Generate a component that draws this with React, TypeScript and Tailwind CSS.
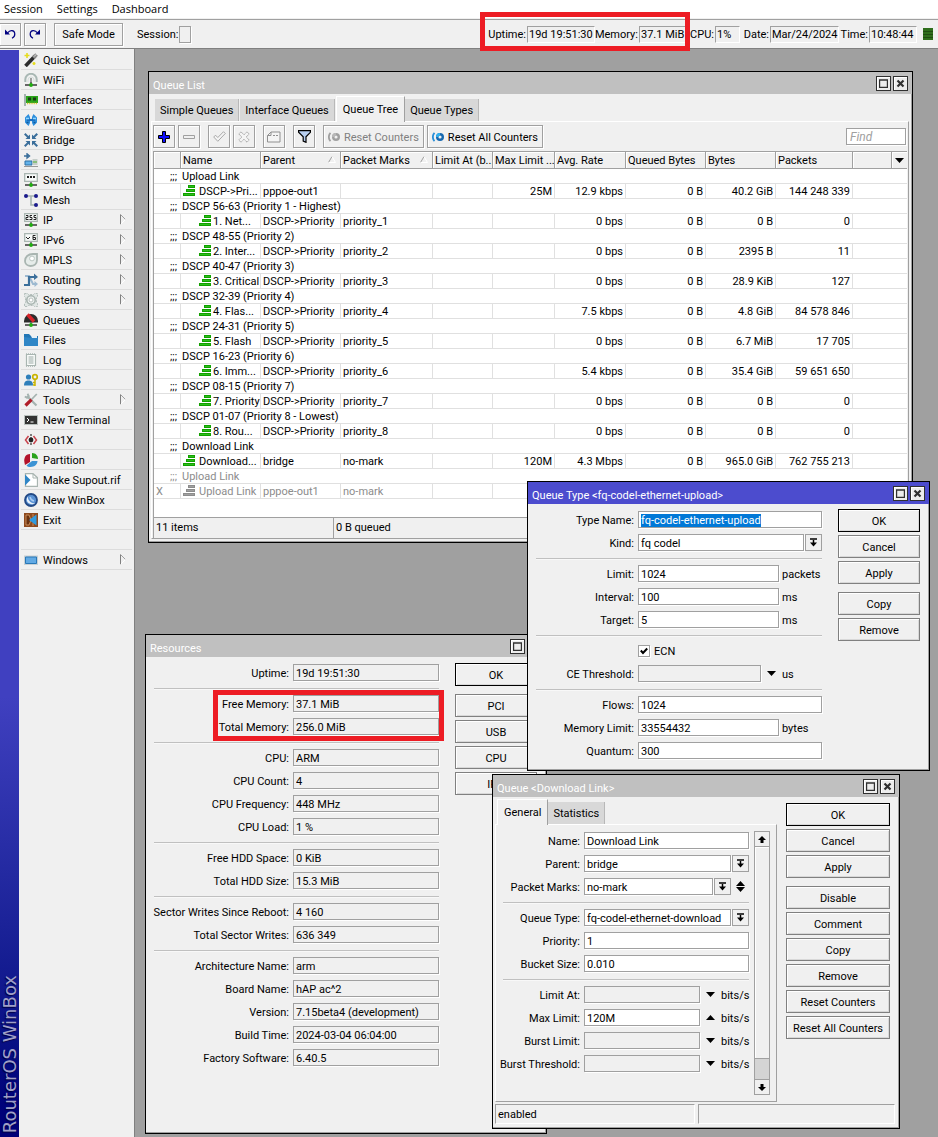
import { useEffect, useRef, type ReactNode } from 'react';
import clsx from 'clsx';

const FIELD =
  'h-[17px] min-w-0 rounded-none border border-[#a0a0a0] px-[2px] pt-[2px] text-[11px] leading-[13px] shadow-[1px_1px_0_#fff] outline-none';

/* ---------- icons ---------- */

const Svg = ({ children, className = 'size-[14px]', box = '0 0 14 14' }: { children: ReactNode; className?: string; box?: string }) => (
  <svg viewBox={box} className={clsx('shrink-0', className)} aria-hidden="true">
    {children}
  </svg>
);

const Port = () => (
  <>
    <path d="M1 12h12" stroke="#444" strokeWidth="1.6" />
    <path d="M7 9v3" stroke="#555" strokeWidth="1.4" />
    <circle cx="7" cy="12" r="1.9" fill="#1fae10" />
  </>
);

const ICONS: Record<string, ReactNode> = {
  'Quick Set': (
    <>
      <path d="M1.5 13 11 3" stroke="#2b2b2b" strokeWidth="3.6" />
      <path d="M9.3 4.8 12.6 1.4" stroke="#8c8c8c" strokeWidth="3.6" />
      <path d="M10 3.6 12.4 1.2" stroke="#e0e0e0" strokeWidth="1" />
      <path d="M3 0v5M.5 2.5h5M10 9v3M8.5 10.5h3" stroke="#e6dc1e" strokeWidth="1.6" />
    </>
  ),
  WiFi: (
    <>
      <path d="M1.3 9V6.5a5.7 5.7 0 0 1 11.4 0V9" fill="none" stroke="#a9b8b4" strokeWidth="2" />
      <path d="M4 9V7a3 3 0 0 1 6 0v2" fill="none" stroke="#d5dedb" strokeWidth="1" />
      <path d="M7 5v6" stroke="#888" strokeWidth="1.6" />
      <Port />
    </>
  ),
  Interfaces: (
    <>
      <path d="M1 1v12" stroke="#a5b3b0" strokeWidth="2" />
      <path d="M2 3h12v7H2z" fill="#2ca51b" />
      <path d="M4 4.5h3v3H4zM9 4.5h3v3H9z" fill="#1b3a17" />
      <path d="M3 10.5h10" stroke="#d9c62b" strokeWidth="1.4" strokeDasharray="1.2 1" />
    </>
  ),
  WireGuard: (
    <>
      <path d="M4.500 1 1 4.500v5L4.500 13 6 10V4zM9.500 1 13 4.500v5L9.500 13 8 10V4z" fill="#2f8fdc" />
      <path d="M3 7h8" stroke="#1a6fc0" strokeWidth="2.200" />
      <path d="M2 5.500h3M9 5.500h3" stroke="#8fd6ff" strokeWidth="1.400" />
      <path d="M2.500 9.500h2M9.500 9.500h2" stroke="#125a9e" strokeWidth="1.400" />
    </>
  ),
  Bridge: (
    <g fill="#3b6f9b">
      <path d="M6 6H1.500l1.600-1.600L0 1.500 1.500 0l2.900 3.100L6 1.500zM8 6V1.500l1.600 1.600L12.500 0 14 1.500l-3.100 2.900L12.500 6z" />
      <path d="M6 8v4.500l-1.600-1.600L1.500 14 0 12.500l3.100-2.900L1.500 8zM8 8h4.500l-1.600 1.600 3.100 2.900-1.500 1.500-2.900-3.100L8 12.500z" />
    </g>
  ),
  PPP: (
    <>
      <path d="M0 3h4M3 0.8 5.6 3 3 5.2z" stroke="#3b6f9b" strokeWidth="1.3" fill="#3b6f9b" />
      <path d="M1 8h7v4H1z" fill="#62b2ea" stroke="#2a6ea5" />
      <path d="M8.500 6h5v6h-5z" fill="#c6ceca" />
      <path d="M9 9h4" stroke="#4fae30" />
      <path d="M0 13.500h14" stroke="#999" />
    </>
  ),
  Switch: (
    <>
      <path d="M.7 .7h12.600v7.600H.7z" fill="#f7faf9" stroke="#a9b5b1" strokeWidth="1.3" />
      <path d="M3 4h2M6 4h2M9 4h2" stroke="#222" strokeWidth="1.8" />
      <Port />
    </>
  ),
  Mesh: (
    <>
      <path d="M2 3h10M7 3v9h5" fill="none" stroke="#a5b3b0" strokeWidth="1.6" />
      <circle cx="2" cy="3" r="2" fill="#1a1a8c" />
      <circle cx="12" cy="3" r="2" fill="#1a1a8c" />
      <circle cx="12" cy="12" r="2" fill="#1a1a8c" />
    </>
  ),
  IP: (
    <>
      <path d="M.7 .7h12.600v7.600H.7z" fill="#f7faf9" stroke="#a9b5b1" strokeWidth="1.3" />
      <path d="M2 2.500h2v2h-2v2h2.500M8 2.500H6v2h2v2H5.500M12 2.500h-2v2h2v2h-2.500" fill="none" stroke="#222" strokeWidth="1" />
      <Port />
    </>
  ),
  IPv6: (
    <>
      <path d="M.7 .7h12.600v7.600H.7z" fill="#f7faf9" stroke="#a9b5b1" strokeWidth="1.3" />
      <path d="M2 4l2 2 2-2M11.500 2.500H9v4h2.500v-2H9" fill="none" stroke="#222" strokeWidth="1" />
      <Port />
    </>
  ),
  MPLS: (
    <>
      <path d="M13 1v6c0 4-3 6-6.500 6C3 13 1 10.500 1 8c0-4 3-7 8-7z" fill="#e6ecea" stroke="#a9b5b1" strokeWidth="1.8" />
      <circle cx="8" cy="5.500" r="2.400" fill="#fff" stroke="#bac5c1" />
    </>
  ),
  Routing: (
    <>
      <path d="M1 3h4l4 8h2" fill="none" stroke="#9db9d0" strokeWidth="2" />
      <path d="M10.500 8v6L14 11z" fill="#9db9d0" />
      <path d="M0 12h5V4h5" fill="none" stroke="#3b6f9b" strokeWidth="2.200" />
      <path d="M10 .5v6.500L14 4z" fill="#3b6f9b" />
    </>
  ),
  System: (
    <>
      <path d="M.5 .5h3l1 1h5l1-1h3v3l-1 1v5l1 1v3h-3l-1-1h-5l-1 1h-3v-3l1-1v-5l-1-1z" fill="#e0e6e4" stroke="#b3bebb" strokeDasharray="2 1" />
      <circle cx="7" cy="7" r="4.200" fill="#eef1f0" stroke="#a9b5b1" strokeWidth="1.600" />
      <circle cx="7" cy="7" r="2" fill="#fff" stroke="#b7c1be" />
    </>
  ),
  Queues: (
    <>
      <path d="M0 8a7 7 0 0 1 14 0v1.500H0z" fill="#2c2c2c" />
      <path d="M3.500 1.500 10 8.500" stroke="#d8232a" strokeWidth="3.400" />
      <Port />
    </>
  ),
  Files: (
    <>
      <path d="M0 1h5l2 2h7v10H0z" fill="#2377b5" />
      <path d="M7 3h6v2H8z" fill="#e6f0f7" />
      <path d="M0 4l8 1h6v8H0z" fill="#2f86c6" />
    </>
  ),
  Log: (
    <>
      <path d="M2.500 1.500h9v11h-9z" fill="#fafcfb" stroke="#a9b5b1" strokeWidth="1.200" />
      <path d="M4.500 4h5M4.500 6h5M4.500 8h5M4.500 10h5" stroke="#9aa8a4" />
      <path d="M2 .8h10M2 13.300h10" stroke="#a9b5b1" strokeDasharray="1 1" />
    </>
  ),
  RADIUS: (
    <>
      <circle cx="4.500" cy="4" r="2.600" fill="#2f7fba" />
      <path d="M0 12.500c0-4 2-5 4.500-5S9 8.500 9 12.500z" fill="#2f7fba" />
      <circle cx="11" cy="4" r="2.300" fill="none" stroke="#c9b400" strokeWidth="1.700" />
      <path d="M11 6v7M11 9.500H9M11 12H9" stroke="#c9b400" strokeWidth="1.500" />
    </>
  ),
  Tools: (
    <>
      <path d="M3 3l9.500 9.500" stroke="#a5b3b0" strokeWidth="2.200" />
      <path d="M.8 3.500 3 4.800 4.800 3 3.500 .8" stroke="#a5b3b0" strokeWidth="1.800" fill="none" />
      <path d="M7.500 6.500 12.800 1" stroke="#a5b3b0" strokeWidth="1.800" />
      <path d="M1.500 12.500 7.500 6.700" stroke="#b01c28" strokeWidth="3.200" />
    </>
  ),
  'New Terminal': (
    <>
      <path d="M.5 2.500h13v9H.5z" fill="#333" stroke="#b9c1be" />
      <path d="M3 5l2 2-2 2M6.500 9h3" fill="none" stroke="#fff" />
    </>
  ),
  Dot1X: (
    <>
      <path d="M4.500 3 1.500 7l3 4M9.500 3l3 4-3 4" fill="none" stroke="#c8434c" strokeWidth="1.500" />
      <path d="M7 1v12" stroke="#555" strokeWidth="1.500" strokeDasharray="2 1" />
      <circle cx="7" cy="7" r="2.400" fill="#222" />
    </>
  ),
  Partition: (
    <>
      <path d="M6 1v8L1 12C-1 6 1 1 6 1z" fill="#b3122a" />
      <path d="M8 0c4 0 6 3 6 6L8 5z" fill="#2aa31c" />
      <path d="M13.500 8c0 3-3 6-7 6-2 0-3-.5-4-1.500L8 8z" fill="#3c93d4" />
    </>
  ),
  'Make Supout.rif': (
    <>
      <path d="M1.500 .7H9l4.500 4v8.600h-12z" fill="#fff" stroke="#a9b5b1" strokeWidth="1.300" />
      <path d="M9 1v4h4" fill="none" stroke="#a9b5b1" />
      <path d="M1 1.500 6.500 7 1 12.500z" fill="#2f86c6" />
    </>
  ),
  'New WinBox': (
    <>
      <circle cx="7" cy="7" r="6" fill="#5a92d4" stroke="#234a86" strokeWidth="1.800" />
      <path d="M3.800 3.500C3.800 7.500 7 10.500 11 10.300 9.500 12 4.800 11.500 3.200 8.500 2.500 7 2.800 4.800 3.800 3.500z" fill="#e8f2fc" />
      <path d="M6 4c.5 2 2 3.500 4 4" fill="none" stroke="#a9ccf2" strokeWidth="1.400" />
    </>
  ),
  Exit: (
    <>
      <path d="M0 0h14v14H0z" fill="#8e4a1e" />
      <path d="M2 2h3l2 5-2 5H2zM9 1v3M9 10v3" fill="#6a3210" stroke="#d9a06a" strokeWidth=".8" />
      <path d="M12.500 1.500v11L5 7z" fill="#2f9be0" />
    </>
  ),
  Windows: (
    <>
      <path d="M0 2.500h14v9.500H0z" fill="#c8d0d4" />
      <path d="M1.500 4h11v6.500h-11z" fill="#62aae4" stroke="#2878b8" />
    </>
  ),
};

const QueueIcon = ({ off }: { off?: boolean }) => (
  <Svg box="0 0 12 11" className="-mt-px h-[11px] w-3">
    <path d="M5 0h7v3H5zM3 4h9v3H3zM0 8h12v3H0z" fill={off ? '#8c8c8c' : '#12a000'} />
    <path d="M6 1.500h5M4 5.500h7M1 9.500h10" stroke={off ? '#a0a0a0' : '#2cc01a'} />
  </Svg>
);

const ResetIcon = ({ off }: { off?: boolean }) => (
  <Svg box="0 0 12 10" className="h-[10px] w-3">
    <path d="M2.500 .8C.3 3 .3 7 2.500 9.200" fill="none" stroke={off ? '#a0a0a0' : '#2a8fd8'} strokeWidth="1.800" />
    <circle cx="8" cy="5" r="2.800" fill="none" stroke={off ? '#a0a0a0' : '#1668b0'} strokeWidth="2.400" />
    <path d="M5.200 5A2.800 2.800 0 0 1 8 2.200" fill="none" stroke={off ? '#b8b8b8' : '#2fb0f0'} strokeWidth="2.400" />
  </Svg>
);

const DropIcon = () => (
  <Svg box="0 0 9 9" className="size-[9px]">
    <path d="M1 1h7M4.500 2v3" stroke="#000" strokeWidth="1.500" />
    <path d="M1 4.500h7L4.500 8.500z" />
  </Svg>
);

const Triangle = ({ up }: { up?: boolean }) => (
  <Svg box="0 0 9 5" className="h-[5px] w-[9px]">
    <path d={up ? 'M0 5h9L4.500 0z' : 'M0 0h9L4.500 5z'} />
  </Svg>
);

/* ---------- window parts ---------- */

const TitleButton = ({ name }: { name: string }) => (
  <button aria-label={name} className="flex size-[15px] items-center justify-center border border-[#303030] bg-[#ececec] shadow-[inset_1px_1px_0_#fff]">
    <Svg box="0 0 9 9" className="size-[9px]">
      {name === 'Close' ? (
        <path d="M1.500 1.500l6 6M7.500 1.500l-6 6" stroke="#303030" strokeWidth="2.200" />
      ) : (
        <path d="M.5 1v7.500h8V1M0 1h9" fill="none" stroke="#303030" strokeWidth="1.400" />
      )}
    </Svg>
  </button>
);

const Window = ({ title, active, className, children }: { title: string; active?: boolean; className: string; children: ReactNode }) => (
  <section className={clsx('absolute flex flex-col border border-black bg-[#f0f0f0] shadow-[inset_-1px_-1px_0_#a0a0a0]', className)}>
    <header className={clsx('flex h-[22px] shrink-0 items-center gap-[2px] pr-1 pl-1 text-white', active ? 'bg-[#4c4cce]' : 'bg-[#c0c0c0]')}>
      <h2 className="flex-1 pt-[6px] leading-4">{title}</h2>
      <TitleButton name="Maximize" />
      <TitleButton name="Close" />
    </header>
    {children}
  </section>
);

const Buttons = ({ groups, className }: { groups: string[][]; className: string }) => (
  <div className={clsx('flex shrink-0 flex-col gap-2', className)}>
    {groups.map((group) => (
      <div key={group[0]} className="flex flex-col gap-[3px]">
        {group.map((name) => (
          <button
            key={name}
            className={clsx(
              'h-[23px] border bg-[#f0f0f0] pt-[2px] text-center whitespace-nowrap shadow-[inset_1px_1px_0_#fff,inset_-1px_-1px_0_#d8d8d8]',
              name === 'OK' ? 'border-black' : 'border-[#808080]',
            )}
          >
            {name}
          </button>
        ))}
      </div>
    ))}
  </div>
);

const Separator = () => <hr className="mt-px h-px border-0 bg-[#c0c0c0] shadow-[0_1px_0_#f8f8f8]" />;

type RowProps = { id: string; label: string; labelWidth: string; children: ReactNode };

const Row = ({ id, label, labelWidth, children }: RowProps) => (
  <div className="flex h-[17px] items-center gap-1">
    <label htmlFor={id} className={clsx('flex shrink-0 justify-end pt-[2px] whitespace-nowrap', labelWidth)}>
      {label}
    </label>
    <div className="flex min-w-0 flex-1 items-center">{children}</div>
  </div>
);

const Unit = ({ name, className }: { name: string; className: string }) => (
  <span className={clsx('shrink-0 pt-[2px] pl-[3px] whitespace-nowrap', className)}>{name}</span>
);

const Input = ({ id, value = '', off }: { id: string; value?: string; off?: boolean }) => (
  <input id={id} defaultValue={value} readOnly={off} className={clsx(FIELD, 'flex-1', off ? 'bg-[#f0f0f0]' : 'bg-white')} />
);

const Select = ({ id, value }: { id: string; value: string }) => (
  <>
    <select id={id} defaultValue={value} className={clsx(FIELD, 'flex-1 appearance-none bg-white')}>
      <option>{value}</option>
    </select>
    <button
      aria-label={`Choose ${value}`}
      className="ml-px flex size-[17px] shrink-0 items-center justify-center border border-[#a0a0a0] bg-[#f0f0f0]"
    >
      <DropIcon />
    </button>
  </>
);

const Tab = ({ name, active }: { name: string; active?: boolean }) => (
  <button
    role="tab"
    aria-selected={!!active}
    className={clsx(
      'border-r border-[#a0a0a0] pt-[2px] whitespace-nowrap',
      active
        ? 'z-10 -mb-px h-[26px] border-t border-l border-t-white border-l-white bg-[#f0f0f0] px-[6px] pb-[2px]'
        : 'mr-px h-[22px] border-r-[#b8b8b8] bg-[#d8d8d8] px-[5px]',
    )}
  >
    {name}
  </button>
);

/* ---------- queue list ---------- */

type Queue = {
  comment: string;
  name: string;
  parent: string;
  mark?: string;
  max?: string;
  rate?: string;
  queued?: string;
  bytes?: string;
  packets?: string;
  nested?: boolean;
  off?: boolean;
};

const child = (comment: string, name: string, mark: string, rate: string, bytes: string, packets: string): Queue => ({
  comment,
  name,
  parent: 'DSCP->Priority',
  mark,
  rate,
  queued: '0 B',
  bytes,
  packets,
  nested: true,
});

const QUEUES: Queue[] = [
  { comment: 'Upload Link', name: 'DSCP->Pri...', parent: 'pppoe-out1', max: '25M', rate: '12.9 kbps', queued: '0 B', bytes: '40.2 GiB', packets: '144 248 339' },
  child('DSCP 56-63 (Priority 1 - Highest)', '1. Net...', 'priority_1', '0 bps', '0 B', '0'),
  child('DSCP 48-55 (Priority 2)', '2. Inter...', 'priority_2', '0 bps', '2395 B', '11'),
  child('DSCP 40-47 (Priority 3)', '3. Critical', 'priority_3', '0 bps', '28.9 KiB', '127'),
  child('DSCP 32-39 (Priority 4)', '4. Flas...', 'priority_4', '7.5 kbps', '4.8 GiB', '84 578 846'),
  child('DSCP 24-31 (Priority 5)', '5. Flash', 'priority_5', '0 bps', '6.7 MiB', '17 705'),
  child('DSCP 16-23 (Priority 6)', '6. Imm...', 'priority_6', '5.4 kbps', '35.4 GiB', '59 651 650'),
  child('DSCP 08-15 (Priority 7)', '7. Priority', 'priority_7', '0 bps', '0 B', '0'),
  child('DSCP 01-07 (Priority 8 - Lowest)', '8. Rou...', 'priority_8', '0 bps', '0 B', '0'),
  { comment: 'Download Link', name: 'Download...', parent: 'bridge', mark: 'no-mark', max: '120M', rate: '4.3 Mbps', queued: '0 B', bytes: '965.0 GiB', packets: '762 755 213' },
  { comment: 'Upload Link', name: 'Upload Link', parent: 'pppoe-out1', mark: 'no-mark', off: true },
];

const COLUMNS = ['', 'Name', 'Parent', 'Packet Marks', 'Limit At (b...', 'Max Limit ...', 'Avg. Rate', 'Queued Bytes', 'Bytes', 'Packets', ''];
const TD = 'h-[15px] overflow-hidden border-r border-b border-[#e0e0e0] pt-[2px] pl-[2px] leading-[12px] whitespace-nowrap';
const TD_NUMBER = clsx(TD, 'pr-[2px] text-right');

const QueueTable = () => (
  <table className="w-full table-fixed border-separate border-spacing-0">
    <colgroup>
      <col className="w-[27px]" />
      <col className="w-20" />
      <col className="w-20" />
      <col className="w-[92px]" />
      <col className="w-[60px]" />
      <col className="w-[62px]" />
      <col className="w-[71px]" />
      <col className="w-20" />
      <col className="w-[70px]" />
      <col className="w-[77px]" />
      <col className="w-[39px]" />
      <col />
    </colgroup>
    <thead>
      <tr>
        {COLUMNS.map((name, i) => (
          <th
            key={i}
            className="relative h-[17px] overflow-hidden border-r border-b border-[#a0a0a0] bg-[#f0f0f0] pt-[2px] pl-[2px] text-left leading-[14px] font-normal whitespace-nowrap shadow-[inset_1px_1px_0_#fff]"
          >
            {name}
            {(name === 'Parent' || name === 'Packet Marks') && (
              <Svg box="0 0 8 7" className="absolute top-1 right-1 h-[7px] w-2">
                <path d="M.5 6.500 4 .5" stroke="#a0a0a0" />
                <path d="M4 .5 7.500 6.500h-7" fill="none" stroke="#fff" />
              </Svg>
            )}
          </th>
        ))}
        <th className="h-[17px] border-b border-[#a0a0a0] bg-[#f0f0f0] shadow-[inset_1px_1px_0_#fff]">
          <button aria-label="Columns" className="flex w-full justify-center">
            <Triangle />
          </button>
        </th>
      </tr>
    </thead>
    {QUEUES.map((q) => (
      <tbody key={q.comment + q.name} className={q.off ? 'text-[#8c8c8c]' : undefined}>
        <tr>
          <td colSpan={12} className="h-[15px] border-b border-[#e0e0e0] pt-[2px] pl-4 leading-[12px]">
            <span className="flex">
              <span className="w-3">;;;</span>
              {q.comment}
            </span>
          </td>
        </tr>
        <tr>
          <td className={TD}>{q.off && 'X'}</td>
          <td className={TD}>
            <span className={clsx('flex h-3 items-start', q.nested ? 'gap-[2px] pl-4' : 'gap-1')}>
              <QueueIcon off={q.off} />
              {q.name}
            </span>
          </td>
          <td className={TD}>{q.parent}</td>
          <td className={TD}>{q.mark}</td>
          <td className={TD} />
          <td className={TD_NUMBER}>{q.max}</td>
          <td className={TD_NUMBER}>{q.rate}</td>
          <td className={TD_NUMBER}>{q.queued}</td>
          <td className={TD_NUMBER}>{q.bytes}</td>
          <td className={TD_NUMBER}>{q.packets}</td>
          <td colSpan={2} className="border-b border-[#e0e0e0]" />
        </tr>
      </tbody>
    ))}
  </table>
);

const TOOL = 'flex h-[23px] shrink-0 items-center border border-[#a0a0a0] bg-[#f0f0f0] shadow-[1px_1px_0_#fff,inset_1px_1px_0_#fff]';

const ToolButton = ({ name, children, className }: { name: string; children: ReactNode; className?: string }) => (
  <button aria-label={name} className={clsx(TOOL, 'w-[22px] justify-center', className)}>
    {children}
  </button>
);

const QueueList = () => (
  <Window title="Queue List" className="top-[22px] left-[13px] w-[765px]">
    <div className="flex flex-col pr-[3px] pb-[3px] pl-[2px]">
      <div role="tablist" className="flex h-[27px] items-end pl-1">
        <Tab name="Simple Queues" />
        <Tab name="Interface Queues" />
        <Tab name="Queue Tree" active />
        <Tab name="Queue Types" />
      </div>
      <div className="border border-t-white border-r-[#a0a0a0] border-b-[#a0a0a0] border-l-white px-px pt-[3px]">
        <div className="flex items-center pr-px pb-[3px]">
          <ToolButton name="Add">
            <Svg box="0 0 12 12" className="size-3">
              <path d="M4.500 .5h3v4h4v3h-4v4h-3v-4h-4v-3h4z" fill="#1010ff" stroke="#000" />
            </Svg>
          </ToolButton>
          <ToolButton name="Remove" className="ml-[3px]">
            <Svg box="0 0 12 4" className="h-1 w-3">
              <path d="M.5 .5h11v3H.5z" fill="#f0f0f0" stroke="#a0a0a0" />
            </Svg>
          </ToolButton>
          <ToolButton name="Enable" className="ml-2">
            <Svg box="0 0 13 11" className="h-[11px] w-[13px]">
              <path d="M.7 6 2.500 4.200 4.800 6.500 10.500 .7l1.800 1.800-7.500 7.800z" fill="#f4f4f4" stroke="#a0a0a0" strokeWidth=".9" />
            </Svg>
          </ToolButton>
          <ToolButton name="Disable" className="ml-[3px]">
            <Svg box="0 0 12 12" className="size-3">
              <path d="M3 .8 6 3.800l3-3L11.200 3l-3 3 3 3L9 11.200l-3-3-3 3L.8 9l3-3-3-3z" fill="#f4f4f4" stroke="#a0a0a0" strokeDasharray="1.500 .6" />
            </Svg>
          </ToolButton>
          <ToolButton name="Comment" className="ml-2">
            <Svg box="0 0 14 12" className="h-3 w-[14px]">
              <path d="M.5 4.500 4 1h9v10H.5zM4 1v3.500H.5" fill="#f4f4f4" stroke="#909090" />
              <path d="M6 4.500h5" stroke="#909090" strokeDasharray="2 1" />
            </Svg>
          </ToolButton>
          <ToolButton name="Filter" className="ml-2">
            <Svg box="0 0 13 13" className="size-[13px]">
              <path d="M.6 .7h11.800v1.600L8 6.800v5.500L5.200 11V6.800L.6 2.300z" fill="#b8cff0" stroke="#000" strokeWidth="1.200" />
            </Svg>
          </ToolButton>
          <button className={clsx(TOOL, 'ml-2 gap-1 px-[4px] whitespace-nowrap text-[#808080]')}>
            <ResetIcon off />
            <span className="pt-[2px]">Reset Counters</span>
          </button>
          <button className={clsx(TOOL, 'ml-[3px] gap-1 px-[4px] whitespace-nowrap')}>
            <ResetIcon />
            <span className="pt-[2px]">Reset All Counters</span>
          </button>
          <input
            aria-label="Find"
            placeholder="Find"
            className="ml-auto h-[17px] w-[60px] border border-[#a0a0a0] bg-white px-[3px] text-[12px] italic shadow-[1px_1px_0_#fff] outline-none placeholder:text-[#a0a0a0]"
          />
        </div>
        <div className="min-h-[366px] border-t border-l border-[#a0a0a0] bg-white">
          <QueueTable />
        </div>
        <footer className="flex h-[21px] border-t border-l border-[#a0a0a0] leading-[20px]">
          <span className="w-[179px] pl-[2px]">11 items</span>
          <span className="flex-1 border-l border-[#a0a0a0] pl-[2px]">0 B queued</span>
        </footer>
      </div>
    </div>
  </Window>
);

/* ---------- resources ---------- */

const RESOURCES: [string, string][][] = [
  [['Uptime', '19d 19:51:30']],
  [
    ['Free Memory', '37.1 MiB'],
    ['Total Memory', '256.0 MiB'],
  ],
  [
    ['CPU', 'ARM'],
    ['CPU Count', '4'],
    ['CPU Frequency', '448 MHz'],
    ['CPU Load', '1 %'],
  ],
  [
    ['Free HDD Space', '0 KiB'],
    ['Total HDD Size', '15.3 MiB'],
  ],
  [
    ['Sector Writes Since Reboot', '4 160'],
    ['Total Sector Writes', '636 349'],
  ],
  [
    ['Architecture Name', 'arm'],
    ['Board Name', 'hAP ac^2'],
    ['Version', '7.15beta4 (development)'],
    ['Build Time', '2024-03-04 06:04:00'],
    ['Factory Software', '6.40.5'],
  ],
];

const Resources = () => (
  <Window title="Resources" className="top-[585px] left-[10px] w-[402px]">
    <div className="flex gap-4 pt-[6px] pr-[9px] pb-[67px] pl-2">
      <div className="flex min-w-0 flex-1 flex-col gap-[6px] pt-px">
        {RESOURCES.map((group, i) => (
          <div key={i} className="flex flex-col gap-[6px]">
            {i > 0 && <Separator />}
            {group.map(([label, value]) => (
              <Row key={label} id={`res-${label}`} label={`${label}:`} labelWidth="w-[135px]">
                <Input id={`res-${label}`} value={value} off />
              </Row>
            ))}
          </div>
        ))}
      </div>
      <Buttons className="w-[82px]" groups={[['OK'], ['PCI', 'USB', 'CPU', 'IRQ']]} />
    </div>
    <div className="pointer-events-none absolute top-[55px] left-[67px] h-[51px] w-[231px] border-5 border-[#ed1c24]" />
  </Window>
);

/* ---------- queue type ---------- */

const QueueType = () => {
  const nameRef = useRef<HTMLInputElement>(null);

  useEffect(() => {
    nameRef.current?.focus();
    nameRef.current?.select();
  }, []);

  const w = 'w-[98px]';
  return (
    <Window title="Queue Type <fq-codel-ethernet-upload>" active className="top-[432px] left-[392px] w-[403px]">
      <div className="flex gap-4 pt-[5px] pr-[9px] pb-[11px] pl-2">
        <div className="flex min-w-0 flex-1 flex-col gap-[6px] pt-[2px]">
          <Row id="type-name" label="Type Name:" labelWidth={w}>
            <input
              id="type-name"
              ref={nameRef}
              defaultValue="fq-codel-ethernet-upload"
              className={clsx(FIELD, 'flex-1 bg-white selection:bg-[#0078d7] selection:text-white')}
            />
          </Row>
          <Row id="kind" label="Kind:" labelWidth={w}>
            <Select id="kind" value="fq codel" />
          </Row>
          <Separator />
          {[
            ['Limit', '1024', 'packets'],
            ['Interval', '100', 'ms'],
            ['Target', '5', 'ms'],
          ].map(([label, value, unit]) => (
            <Row key={label} id={`type-${label}`} label={`${label}:`} labelWidth={w}>
              <Input id={`type-${label}`} value={value} />
              <Unit name={unit} className="w-[43px]" />
            </Row>
          ))}
          <Separator />
          <div className="flex h-[17px] items-center gap-1 pl-[102px]">
            <input
              id="ecn"
              type="checkbox"
              defaultChecked
              className="peer size-3 appearance-none border border-[#a0a0a0] bg-white shadow-[1px_1px_0_#fff]"
            />
            <Svg box="0 0 8 8" className="pointer-events-none -ml-[14px] hidden size-2 peer-checked:block">
              <path d="M.8 3.500 3 6 7.200 1.500" fill="none" stroke="#000" strokeWidth="2" />
            </Svg>
            <label htmlFor="ecn" className="pt-[2px] pl-[2px]">
              ECN
            </label>
          </div>
          <Row id="ce" label="CE Threshold:" labelWidth={w}>
            <Input id="ce" off />
            <button aria-label="Expand CE Threshold" className="w-[18px] shrink-0 pl-[6px]">
              <Triangle />
            </button>
            <Unit name="us" className="w-[43px]" />
          </Row>
          <Separator />
          <Row id="flows" label="Flows:" labelWidth={w}>
            <Input id="flows" value="1024" />
          </Row>
          <Row id="memory-limit" label="Memory Limit:" labelWidth={w}>
            <Input id="memory-limit" value="33554432" />
            <Unit name="bytes" className="w-[43px]" />
          </Row>
          <Row id="quantum" label="Quantum:" labelWidth={w}>
            <Input id="quantum" value="300" />
          </Row>
        </div>
        <Buttons className="w-[82px]" groups={[['OK', 'Cancel', 'Apply'], ['Copy', 'Remove']]} />
      </div>
    </Window>
  );
};

/* ---------- queue <download link> ---------- */

const ScrollArrow = ({ up }: { up?: boolean }) => (
  <button
    aria-label={up ? 'Scroll up' : 'Scroll down'}
    className={clsx('flex h-[15px] shrink-0 items-center justify-center border-[#a0a0a0] bg-[#f0f0f0]', up ? 'border-b' : 'border-t')}
  >
    <Svg box="0 0 8 7" className={clsx('h-[7px] w-2', !up && 'rotate-180')}>
      <path d="M0 4h8L4 0zM2.500 4h3v3h-3z" />
    </Svg>
  </button>
);

const DownloadLink = () => {
  const w = 'w-[77px]';
  return (
    <Window title="Queue <Download Link>" className="top-[725px] left-[357px] w-[408px]">
      <div className="flex">
        <div className="flex min-w-0 flex-1 flex-col pl-[2px]">
          <div role="tablist" className="flex h-[27px] items-end pl-[2px]">
            <Tab name="General" active />
            <Tab name="Statistics" />
          </div>
          <div className="flex gap-[5px] border border-t-white border-r-[#a0a0a0] border-b-[#a0a0a0] border-l-white pt-[6px] pr-[6px] pb-[6px] pl-[7px]">
            <div className="flex min-w-0 flex-1 flex-col gap-[6px] pt-px">
              <Row id="q-name" label="Name:" labelWidth={w}>
                <Input id="q-name" value="Download Link" />
              </Row>
              <Row id="q-parent" label="Parent:" labelWidth={w}>
                <Select id="q-parent" value="bridge" />
              </Row>
              <Row id="q-marks" label="Packet Marks:" labelWidth={w}>
                <Select id="q-marks" value="no-mark" />
                <button aria-label="Change packet marks" className="flex w-[18px] shrink-0 flex-col gap-px pl-[5px]">
                  <Triangle up />
                  <Triangle />
                </button>
              </Row>
              <Separator />
              <Row id="q-type" label="Queue Type:" labelWidth={w}>
                <Select id="q-type" value="fq-codel-ethernet-download" />
              </Row>
              <Row id="q-priority" label="Priority:" labelWidth={w}>
                <Input id="q-priority" value="1" />
              </Row>
              <Row id="q-bucket" label="Bucket Size:" labelWidth={w}>
                <Input id="q-bucket" value="0.010" />
              </Row>
              <Separator />
              {['Limit At', 'Max Limit', 'Burst Limit', 'Burst Threshold'].map((label) => {
                const set = label === 'Max Limit';
                return (
                  <Row key={label} id={`q-${label}`} label={`${label}:`} labelWidth={w}>
                    <Input id={`q-${label}`} value={set ? '120M' : ''} off={!set} />
                    <button aria-label={`Toggle ${label}`} className="w-[18px] shrink-0 pl-[6px]">
                      <Triangle up={set} />
                    </button>
                    <Unit name="bits/s" className="w-[31px]" />
                  </Row>
                );
              })}
            </div>
            <div className="flex h-[264px] w-4 shrink-0 flex-col border border-[#a0a0a0] bg-[#d4d4d4]">
              <ScrollArrow up />
              <div className="flex-1 bg-[#f0f0f0] shadow-[inset_1px_1px_0_#fff]" />
              <div className="h-[21px] border-t border-[#a0a0a0]" />
              <ScrollArrow />
            </div>
          </div>
        </div>
        <Buttons
          className="w-[122px] px-[9px] pt-[6px]"
          groups={[
            ['OK', 'Cancel', 'Apply'],
            ['Disable', 'Comment', 'Copy', 'Remove', 'Reset Counters', 'Reset All Counters'],
          ]}
        />
      </div>
      <footer className="mt-[2px] flex h-5 gap-[3px] pr-1 pl-[2px] leading-[20px]">
        <span className="flex-1 border border-t-[#a0a0a0] border-r-white border-b-white border-l-[#a0a0a0] pl-[2px]">enabled</span>
        <span className="flex-1 border border-t-[#a0a0a0] border-r-white border-b-white border-l-[#a0a0a0]" />
      </footer>
      <div className="h-1" />
    </Window>
  );
};

/* ---------- shell ---------- */

const MENU = [
  'Quick Set', 'WiFi', 'Interfaces', 'WireGuard', 'Bridge', 'PPP', 'Switch', 'Mesh', 'IP', 'IPv6', 'MPLS', 'Routing', 'System',
  'Queues', 'Files', 'Log', 'RADIUS', 'Tools', 'New Terminal', 'Dot1X', 'Partition', 'Make Supout.rif', 'New WinBox', 'Exit', '', 'Windows',
];
const SUBMENUS = ['IP', 'IPv6', 'MPLS', 'Routing', 'System', 'Tools', 'Windows'];

const STATUS = [
  { label: 'Uptime:', value: '19d 19:51:30', labelClass: 'w-9', boxClass: 'w-[68px]' },
  { label: 'Memory:', value: '37.1 MiB', labelClass: 'w-[43px]', boxClass: 'w-12' },
  { label: 'CPU:', value: '1%', labelClass: 'w-[27px]', boxClass: 'w-[25px]' },
  { label: 'Date:', value: 'Mar/24/2024', labelClass: 'w-[29px]', boxClass: 'w-[69px]' },
  { label: 'Time:', value: '10:48:44', labelClass: 'w-[29px]', boxClass: 'w-12' },
];

const Sidebar = () => (
  <aside className="flex w-[135px] shrink-0 border-r border-[#808080] bg-[#f0f0f0]">
    <div className="mt-px flex w-[19px] flex-col justify-end bg-[#4040c0]">
      <div className="flex h-[440px] items-end bg-linear-to-t from-[#000078] from-5% to-[#4040c0]">
        <span className="rotate-180 pt-1 font-['DejaVu_Sans',sans-serif] text-[18px] leading-[19px] whitespace-nowrap text-[#a0a0c8] [text-shadow:-1px_-1px_1px_#000040] [writing-mode:vertical-rl]">
          RouterOS WinBox
        </span>
      </div>
    </div>
    <nav className="flex flex-1 flex-col pt-px pr-[2px] pl-[2px]">
      {MENU.map((name) => (
        <a key={name} href={`#${name}`} className="flex h-5 items-center gap-[5px] border-b border-[#dcdcdc] pr-[6px] pl-[3px]">
          {name && <Svg>{ICONS[name]}</Svg>}
          <span className="flex-1 pt-[2px]">{name}</span>
          {SUBMENUS.includes(name) && (
            <Svg box="0 0 6 11" className="h-[11px] w-[6px]">
              <path d="M.5 10.500V.5" stroke="#808080" />
              <path d="M.5 .5 5.500 5.500" stroke="#a0a0a0" />
              <path d="M5.500 5.500.5 10.500" stroke="#fff" />
            </Svg>
          )}
        </a>
      ))}
    </nav>
  </aside>
);

const BAR_BUTTON = 'flex h-[23px] items-center justify-center border border-[#a0a0a0] shadow-[1px_1px_0_#fff,inset_1px_1px_0_#fff]';

const App = () => {
  return (
    <div className="relative flex min-h-screen flex-col bg-[#f0f0f0] font-[Roboto,'Liberation_Sans',sans-serif] text-[11px] leading-4 text-black">
      <nav className="flex h-[18px] gap-[14px] bg-white pl-1 font-['Open_Sans','Noto_Sans',sans-serif] leading-[17px]">
        <a href="#session">Session</a>
        <a href="#settings">Settings</a>
        <a href="#dashboard">Dashboard</a>
      </nav>
      <header className="mt-px flex h-[30px] items-center border-t border-b border-[#a0a0a0] border-b-[#808080] pr-[5px]">
        <button aria-label="Undo" className={clsx(BAR_BUTTON, 'w-[21px] border-l-0')}>
          <Svg box="0 0 12 10" className="h-[10px] w-3">
            <path d="M1 .5v5h5z" fill="#000080" />
            <path d="M3.500 4C6 .5 10.500 1 10.800 4.800 11 7 9.500 8.500 8 9.300" fill="none" stroke="#000080" strokeWidth="1.200" />
          </Svg>
        </button>
        <button aria-label="Redo" className={clsx(BAR_BUTTON, 'ml-[3px] w-[22px]')}>
          <Svg box="0 0 12 10" className="h-[10px] w-3">
            <path d="M11 .5v5H6z" fill="#000080" />
            <path d="M8.500 4C6 .5 1.500 1 1.200 4.800 1 7 2.500 8.500 4 9.300" fill="none" stroke="#000080" strokeWidth="1.200" />
          </Svg>
        </button>
        <button className={clsx(BAR_BUTTON, 'ml-2 w-[69px] pt-[2px]')}>Safe Mode</button>
        <span className="ml-[14px] pt-px">Session:</span>
        <span className="ml-px h-[17px] w-3 border border-[#a0a0a0] shadow-[1px_1px_0_#fff]" />
        <div className="ml-auto flex">
          {STATUS.map(({ label, value, labelClass, boxClass }) => (
            <div key={label} className="flex items-center gap-px">
              <span className={clsx('flex justify-end pt-px whitespace-nowrap', labelClass)}>{label}</span>
              <span
                className={clsx(
                  'h-[17px] border border-t-[#a0a0a0] border-r-white border-b-white border-l-[#a0a0a0] pl-px leading-[16px] whitespace-nowrap',
                  boxClass,
                )}
              >
                {value}
              </span>
            </div>
          ))}
        </div>
        <Svg box="0 0 10 12" className="ml-[6px] h-3 w-[10px]">
          <path d="M0 0h10v12H0z" fill="#2f6e1c" />
          <path d="M0 3.500h10M0 6.500h10M0 9.500h10" stroke="#1f4d12" />
        </Svg>
      </header>
      <div className="flex flex-1">
        <Sidebar />
        <main className="relative flex-1 overflow-auto bg-[#a0a0a0]">
          <QueueList />
          <Resources />
          <DownloadLink />
          <QueueType />
        </main>
      </div>
      <div className="pointer-events-none absolute top-3 right-[248px] h-[39px] w-[210px] border-5 border-[#ed1c24]" />
    </div>
  );
};

export default App;
